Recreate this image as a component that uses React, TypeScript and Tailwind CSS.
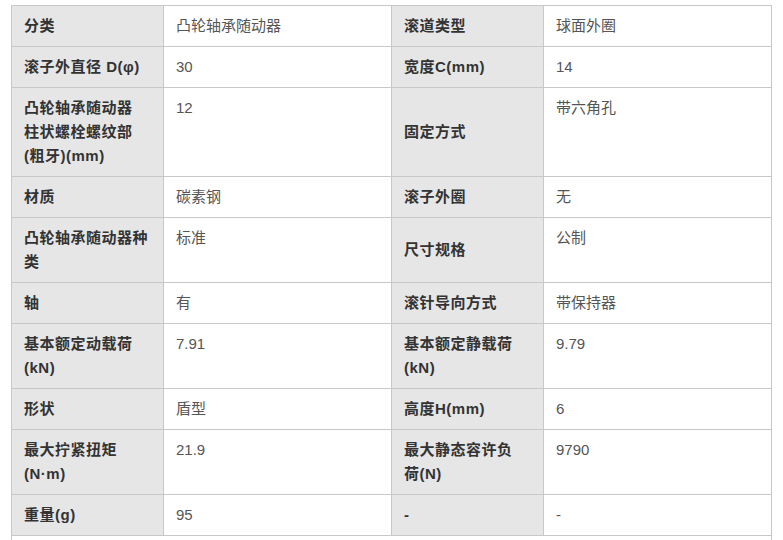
import React from "react";

type Cell = { label: React.ReactNode; value: string };
type Row = [Cell, Cell];

const rows: Row[] = [
  [
    { label: "分类", value: "凸轮轴承随动器" },
    { label: "滚道类型", value: "球面外圈" },
  ],
  [
    { label: "滚子外直径 D(φ)", value: "30" },
    { label: "宽度C(mm)", value: "14" },
  ],
  [
    {
      label: (
        <>
          凸轮轴承随动器
          <br />
          柱状螺栓螺纹部
          <br />
          (粗牙)(mm)
        </>
      ),
      value: "12",
    },
    { label: "固定方式", value: "带六角孔" },
  ],
  [
    { label: "材质", value: "碳素钢" },
    { label: "滚子外圈", value: "无" },
  ],
  [
    {
      label: (
        <>
          凸轮轴承随动器种
          <br />类
        </>
      ),
      value: "标准",
    },
    { label: "尺寸规格", value: "公制" },
  ],
  [
    { label: "轴", value: "有" },
    { label: "滚针导向方式", value: "带保持器" },
  ],
  [
    {
      label: (
        <>
          基本额定动载荷
          <br />
          (kN)
        </>
      ),
      value: "7.91",
    },
    {
      label: (
        <>
          基本额定静载荷
          <br />
          (kN)
        </>
      ),
      value: "9.79",
    },
  ],
  [
    { label: "形状", value: "盾型" },
    { label: "高度H(mm)", value: "6" },
  ],
  [
    {
      label: (
        <>
          最大拧紧扭矩
          <br />
          (N·m)
        </>
      ),
      value: "21.9",
    },
    {
      label: (
        <>
          最大静态容许负
          <br />
          荷(N)
        </>
      ),
      value: "9790",
    },
  ],
  [
    { label: "重量(g)", value: "95" },
    { label: "-", value: "-" },
  ],
];

const font = {
  fontFamily: '"Liberation Sans", Arial, "Noto Sans CJK SC", sans-serif',
};

function Label({ children }: { children: React.ReactNode }) {
  return (
    <div className="flex items-center bg-[#e6e6e6] px-3 py-2 text-[15px] font-bold leading-6 tracking-[0.5px] text-[#333333]">
      <div className="whitespace-nowrap">{children}</div>
    </div>
  );
}

function Value({ children }: { children: React.ReactNode }) {
  return (
    <div className="bg-white px-3 py-2 text-[15px] leading-6 text-[#555555]">
      {children}
    </div>
  );
}

export default function App() {
  return (
    <div className="min-h-[540px] bg-white pl-[11px] pt-[5px]" style={font}>
      <div className="grid w-[761px] grid-cols-[151px_227px_151px_227px] gap-px border border-[#c8c8c8] bg-[#c8c8c8]">
        {rows.map((r, i) => (
          <React.Fragment key={i}>
            <Label>{r[0].label}</Label>
            <Value>{r[0].value}</Value>
            <Label>{r[1].label}</Label>
            <Value>{r[1].value}</Value>
          </React.Fragment>
        ))}
      </div>
      <div className="h-[10px] w-[761px] border-x border-[#c8c8c8]" />
    </div>
  );
}
